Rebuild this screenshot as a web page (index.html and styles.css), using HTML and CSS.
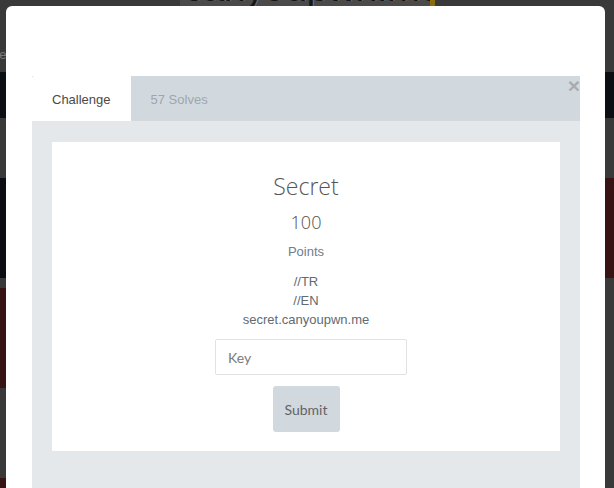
FILE: index.html
```html
<!DOCTYPE html>
<html>
<head>
<meta charset="utf-8">
<link rel="stylesheet" href="styles.css">
</head>
<body>
<div class="page">
  <div class="row r-head"><span class="bg-word">Challenge</span><span class="logo">canyoupwn.me</span></div>
  <div class="row r-nav"></div>
  <div class="row r-gray h60"></div>
  <div class="row split h100"><div class="navy"></div><div class="red"></div></div>
  <div class="row r-gray h10"></div>
  <div class="row split h100"><div class="red"></div><div class="gray"></div></div>
  <div class="row r-gray h90"></div>
  <div class="row split h40"><div class="red"></div><div class="gray"></div></div>
</div>

<div class="modal">
  <div class="modal-header"></div>
  <div class="modal-body">
    <div class="tabs">
      <div class="tab active">Challenge</div>
      <div class="tab">57 Solves</div>
      <button class="close">&times;</button>
    </div>
    <div class="tab-content">
      <div class="card">
        <h2 class="title">Secret</h2>
        <div class="value">100</div>
        <div class="points">Points</div>
        <div class="desc">
          <div>//TR</div>
          <div>//EN</div>
          <div>secret.canyoupwn.me</div>
        </div>
        <input class="key" type="text" placeholder="Key">
        <button class="submit">Submit</button>
      </div>
    </div>
  </div>
</div>
</body>
</html>
```
FILE: styles.css
```css
html, body {
  margin: 0;
  padding: 0;
  height: 100%;
  overflow: hidden;
  background: #393939;
  font-family: "Liberation Sans", Arial, sans-serif;
}

.page {
  display: flex;
  flex-direction: column;
}

.row {
  display: flex;
  position: relative;
  overflow: hidden;
}

.r-head {
  height: 72px;
  background: #393939;
  justify-content: center;
}

.bg-word {
  position: absolute;
  left: -52px;
  top: 47px;
  font-size: 13px;
  color: #7a7a7a;
}

.logo {
  font-family: "Liberation Sans", Arial, sans-serif;
  font-size: 40px;
  line-height: 1;
  margin-top: -33px;
  height: 40px;
  width: 246px;
  padding-left: 4px;
  overflow: hidden;
  white-space: nowrap;
  color: #161616;
  background: #4a4a4a;
  border-right: 5px solid #8a6c0c;
  letter-spacing: -1px;
  text-shadow: 1px 0 0 #777;
}

.r-nav { height: 46px; background: #0b0e13; }
.r-gray { background: #393939; }
.h60 { height: 60px; }
.h100 { height: 100px; }
.h10 { height: 10px; }
.h90 { height: 90px; }
.h40 { height: 40px; }

.split > div { flex: 1; }
.navy { background: #0a0d12; }
.red { background: #371313; }
.gray { background: #393939; }

.modal {
  position: absolute;
  top: 6px;
  left: 6px;
  width: 599px;
  height: 520px;
  background: #ffffff;
  border-radius: 6px;
  overflow: hidden;
}

.modal-header {
  height: 70px;
}

.modal-body {
  padding: 0 25px 0 26px;
}

.tabs {
  position: relative;
  display: flex;
  height: 45px;
  background: #d1d9df;
}

.tab {
  padding: 2px 20px 0;
  line-height: 43px;
  font-size: 13px;
  color: #a0a6ab;
}

.tab.active {
  background: #ffffff;
  color: #4a4a4a;
  border-top-left-radius: 2px;
}

.close {
  position: absolute;
  right: 0;
  top: -1px;
  border: 0;
  background: none;
  padding: 0;
  font-family: "Liberation Sans", Arial, sans-serif;
  font-size: 21px;
  font-weight: bold;
  line-height: 1;
  color: #a7adb1;
}

.tab-content {
  background: #e4e8eb;
  padding: 21px 20px 60px;
}

.card {
  background: #ffffff;
  padding: 29px 20px 19px;
  display: flex;
  flex-direction: column;
  align-items: center;
  text-align: center;
}

.title {
  margin: 0;
  font-family: "Open Sans", sans-serif;
  font-weight: 300;
  font-size: 23px;
  line-height: 30px;
  color: #555555;
}

.value {
  margin-top: 6px;
  font-family: "Open Sans", sans-serif;
  font-weight: 300;
  font-size: 18px;
  line-height: 30px;
  color: #4f4f4f;
}

.points {
  margin-top: 5px;
  font-size: 13px;
  line-height: 20px;
  color: #6f7d8c;
}

.desc {
  margin-top: 10px;
  font-size: 13px;
  line-height: 19px;
  color: #626a72;
}

.key {
  margin-top: 10px;
  margin-left: 10px;
  box-sizing: border-box;
  width: 192px;
  height: 36px;
  border: 1px solid #e2e2e2;
  border-radius: 2px;
  padding: 0 12px;
  font-family: Lato, sans-serif;
  font-size: 14px;
  color: #555;
  outline: none;
}

.key::placeholder {
  color: #7a7a7a;
}

.submit {
  margin-top: 11px;
  width: 67px;
  height: 46px;
  border: 0;
  border-radius: 3px;
  background: #d1d9df;
  font-family: Lato, sans-serif;
  font-size: 14px;
  color: #5f6368;
  padding: 0;
}
```
